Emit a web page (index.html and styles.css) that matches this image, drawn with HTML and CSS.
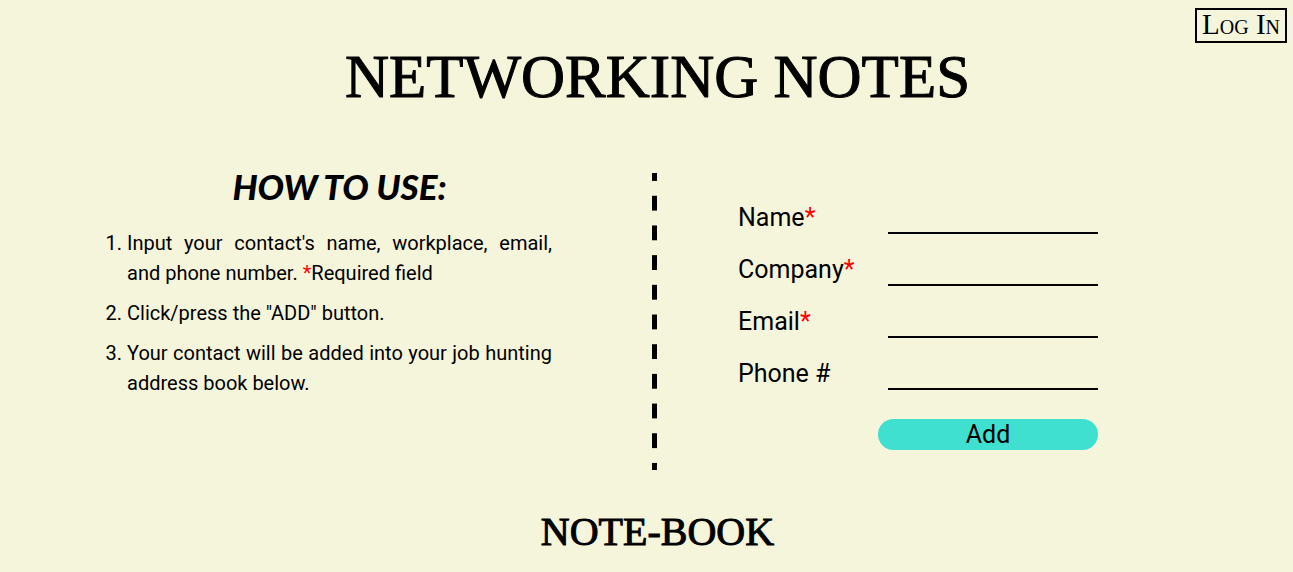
FILE: index.html
```html
<!DOCTYPE html>
<html lang="en">
<head>
<meta charset="utf-8">
<meta name="viewport" content="width=device-width, initial-scale=1">
<title>Networking Notes</title>
<link rel="stylesheet" href="styles.css">
</head>
<body>
<header class="topbar">
  <button class="login" type="button">Log In</button>
</header>
<h1 class="title">NETWORKING NOTES</h1>
<main class="columns">
  <section class="guide">
    <h2 class="guide-title">HOW TO USE:</h2>
    <ol class="steps">
      <li>Input your contact's name, workplace, email, and phone number. <span class="required">*</span>Required field</li>
      <li>Click/press the "ADD" button.</li>
      <li>Your contact will be added into your job hunting address book below.</li>
    </ol>
  </section>
  <div class="divider"></div>
  <form class="contact">
    <div class="field"><label for="name">Name<span class="required">*</span></label><input id="name" type="text" required></div>
    <div class="field"><label for="company">Company<span class="required">*</span></label><input id="company" type="text" required></div>
    <div class="field"><label for="email">Email<span class="required">*</span></label><input id="email" type="email" required></div>
    <div class="field"><label for="phone">Phone #</label><input id="phone" type="tel"></div>
    <button class="add" type="submit">Add</button>
  </form>
</main>
<h2 class="notebook">NOTE-BOOK</h2>
</body>
</html>
```
FILE: styles.css
```css
* {
  box-sizing: border-box;
}

body {
  margin: 0;
  background: beige;
  color: black;
  font-family: Roboto, sans-serif;
  font-size: 20px;
}

.topbar {
  display: flex;
  justify-content: flex-end;
  padding: 8px 6px 0;
}

.login {
  padding: 0 5px 2px;
  border: 2px solid black;
  background: transparent;
  color: black;
  font-family: "Liberation Serif", serif;
  font-size: 29px;
  font-variant: small-caps;
  line-height: 29px;
  -webkit-text-stroke: 0;
}

.title,
.notebook {
  margin: 0;
  padding-left: 22px;
  font-family: "Liberation Serif", serif;
  font-weight: 400;
  text-align: center;
  -webkit-text-stroke: 1px black;
}

.title {
  font-size: 61px;
  line-height: 68px;
}

.columns {
  display: grid;
  grid-template-columns: 1fr 5px 1fr;
  margin-top: 62px;
  padding-left: 16px;
}

.guide {
  padding: 0 100px 0 111px;
}

.guide-title {
  margin: 0 0 29px;
  font-family: Lato, sans-serif;
  font-size: 35px;
  font-style: italic;
  font-weight: 900;
  line-height: 26px;
  text-align: center;
}

.steps {
  display: grid;
  gap: 10px;
  margin: 0;
  padding: 0;
  line-height: 30px;
  text-align: justify;
}

.required {
  color: red;
}

.divider {
  background: linear-gradient(black 25%, transparent 25% 75%, black 75%) 0 0 / 100% 10%;
}

.contact {
  display: grid;
  gap: 20px;
  width: 100%;
  max-width: 441px;
  padding: 29px 0 20px 81px;
  font-size: 25px;
}

.field {
  display: grid;
  grid-template-columns: 150px 1fr;
  line-height: 32px;
}

.field input {
  min-width: 0;
  height: 32px;
  padding: 0;
  border: 0;
  border-bottom: 2px solid black;
  background: transparent;
  font: inherit;
}

.add {
  justify-self: end;
  width: 220px;
  margin-top: 9px;
  padding: 0;
  border: 0;
  border-radius: 16px;
  background: turquoise;
  color: black;
  font-family: inherit;
  font-size: 25px;
  line-height: 31px;
}

.notebook {
  margin-top: 38px;
  padding-bottom: 16px;
  font-size: 40px;
  line-height: 48px;
}
```
